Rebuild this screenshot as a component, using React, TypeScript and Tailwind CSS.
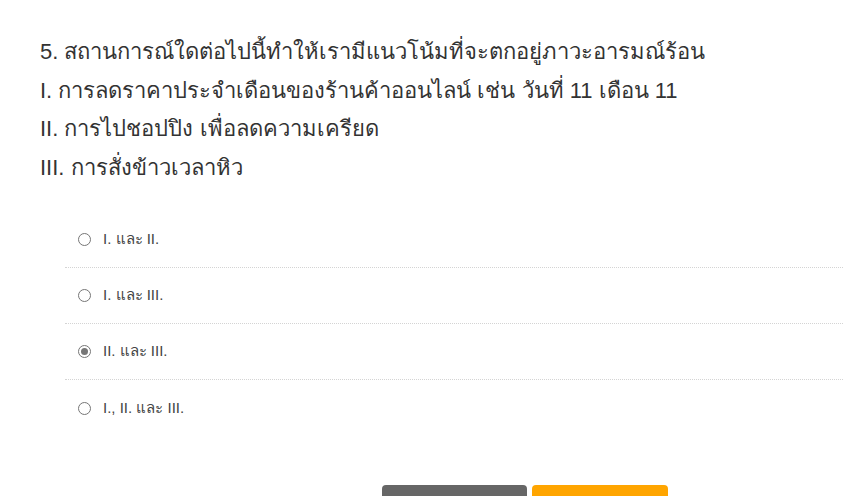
import React from 'react';

const lines = [
  '5. สถานการณ์ใดต่อไปนี้ทำให้เรามีแนวโน้มที่จะตกอยู่ภาวะอารมณ์ร้อน',
  'I. การลดราคาประจำเดือนของร้านค้าออนไลน์ เช่น วันที่ 11 เดือน 11',
  'II. การไปชอปปิง เพื่อลดความเครียด',
  'III. การสั่งข้าวเวลาหิว',
];

const options = [
  { label: 'I. และ II.', checked: false },
  { label: 'I. และ III.', checked: false },
  { label: 'II. และ III.', checked: true },
  { label: 'I., II. และ III.', checked: false },
];

const Radio: React.FC<{ checked: boolean }> = ({ checked }) => (
  <span className="flex h-[13px] w-[13px] shrink-0 items-center justify-center rounded-full border border-[#767676] bg-white">
    {checked && <span className="h-[7px] w-[7px] rounded-full bg-[#767676]" />}
  </span>
);

export default function App() {
  return (
    <div className="min-h-[496px] overflow-hidden bg-white font-['Liberation_Sans','Noto_Sans',sans-serif]">
      <div className="pl-[40px] pt-[33px] text-[22px] leading-[38.5px] text-[#333]">
        {lines.map((l) => (
          <div key={l}>{l}</div>
        ))}
      </div>

      <div className="ml-[65px] mt-[25px]">
        {options.map((o, i) => (
          <div
            key={o.label}
            className={`flex h-[56px] items-center gap-[12px] pl-[13px] ${
              i < options.length - 1 ? 'border-b border-dotted border-[#d4d4d4]' : ''
            }`}
          >
            <Radio checked={o.checked} />
            <span className="text-[15px] text-[#444]">{o.label}</span>
          </div>
        ))}
      </div>

      <div className="ml-[382px] mt-[49px] flex gap-[5px]">
        <button className="h-[40px] w-[145px] rounded-[4px] bg-[#666] pt-[6px] text-[15px] text-white">
          ย้อนกลับ
        </button>
        <button className="h-[40px] w-[136px] rounded-[4px] bg-[#ffa500] pt-[6px] text-[15px] text-white">
          ถัดไป
        </button>
      </div>
    </div>
  );
}
